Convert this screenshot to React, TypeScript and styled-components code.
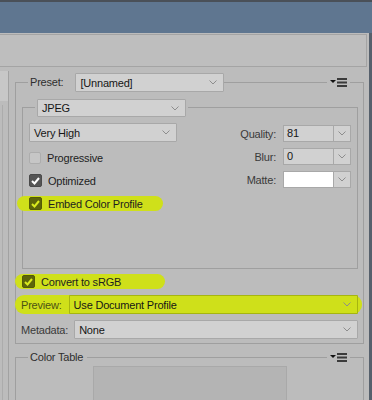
import React from 'react';
import styled, { createGlobalStyle } from 'styled-components';

const GlobalStyle = createGlobalStyle`
  html, body { margin: 0; padding: 0; background: #bcbcbc; }
  body {
    font-family: "Liberation Sans", Arial, sans-serif;
    font-size: 11px;
    letter-spacing: -0.2px;
    color: #1e1e1e;
  }
  * { box-sizing: border-box; }
`;

const MARKER = '#cfe01a';
const LINE = '#9f9f9f';

const Window = styled.div`
  width: 372px;
  height: 400px;
  overflow: hidden;
  display: flex;
  flex-direction: column;
  background: #bcbcbc;
  border-top: 2px solid #4a5058;
`;

const TitleBar = styled.div`
  flex: none;
  height: 31px;
  background: #5f7690;
`;

const Frame = styled.div`
  flex: 1;
  display: flex;
  min-height: 0;
`;

const Workspace = styled.div`
  flex: 1;
  display: flex;
  flex-direction: column;
  min-width: 0;
`;

const WindowEdge = styled.div`
  width: 3px;
  background: #56606c;
`;

const ToolbarBand = styled.div`
  flex: none;
  height: 34px;
  padding-top: 1px;
`;

const ToolbarBox = styled.div`
  height: 33px;
  margin-left: -1px;
  margin-right: 2px;
  border: 1px solid #a4a4a4;
  background: #bebebe;
`;

const Columns = styled.div`
  flex: 1;
  display: flex;
  min-height: 0;
`;

const LeftPanel = styled.div`
  width: 9px;
  margin-top: 4px;
  border-right: 1px solid #a2a2a2;
  display: flex;
  flex-direction: column;
`;

const LeftHead = styled.div`
  height: 30px;
  background: #c7c7c7;
`;

const LeftBody = styled.div`
  flex: 1;
  margin: 4px 0 0 2px;
  border-left: 1px solid #acacac;
`;

const Main = styled.div`
  flex: 1;
  padding: 6px 5px 0 6px;
`;

const Group = styled.div<{ $gap?: number }>`
  margin-top: ${(p) => p.$gap ?? 9}px;
  border: 1px solid ${LINE};
  padding: 0 5px 4px 6px;
`;

const InnerGroup = styled.div`
  margin-top: 15px;
  border: 1px solid ${LINE};
  padding: 0 6px 57px 6px;
`;

const GroupHead = styled.div<{ $h: number }>`
  display: flex;
  align-items: center;
  height: ${(p) => p.$h}px;
  margin-top: ${(p) => -Math.ceil(p.$h / 2)}px;
`;

const Legend = styled.span<{ $indent: number; $after: number }>`
  margin-left: ${(p) => p.$indent}px;
  padding: 0 ${(p) => p.$after}px 0 2px;
  background: #bcbcbc;
  color: #2e2e2e;
  line-height: 19px;
`;

const HeadSlot = styled.div<{ $indent: number }>`
  margin-left: ${(p) => p.$indent}px;
  padding: 0 2px;
  background: #bcbcbc;
  display: flex;
`;

const Spacer = styled.div`
  flex: 1;
`;

const MenuButton = styled.div`
  display: flex;
  align-items: center;
  padding: 0 3px;
  margin-right: 8px;
  background: #bcbcbc;
  height: 11px;
`;

const SelectBox = styled.div<{ $w?: number; $h?: number; $hl?: boolean }>`
  display: flex;
  align-items: center;
  width: ${(p) => (p.$w ? `${p.$w}px` : 'auto')};
  flex: ${(p) => (p.$w ? 'none' : '1')};
  height: ${(p) => p.$h ?? 19}px;
  padding: 0 6px 0 4px;
  border: 1px solid ${(p) => (p.$hl ? 'rgba(90, 100, 0, 0.35)' : '#a8a8a8')};
  border-radius: 1px;
  background: ${(p) => (p.$hl ? MARKER : '#d1d1d1')};
  color: #161616;
  white-space: nowrap;
`;

const SelectText = styled.span`
  flex: 1;
`;

const Body = styled.div`
  display: flex;
  justify-content: space-between;
  align-items: flex-start;
  margin-top: 6px;
`;

const LeftCol = styled.div`
  display: flex;
  flex-direction: column;
  gap: 8px;
`;

const RightCol = styled.div`
  display: grid;
  grid-template-columns: auto 68px;
  column-gap: 7px;
  row-gap: 6px;
  align-items: center;
  align-content: start;
  justify-items: end;
  padding-top: 2px;
`;

const FieldLabel = styled.span<{ $hl?: boolean }>`
  color: ${(p) => (p.$hl ? '#4b5214' : '#3a3a3a')};
  white-space: nowrap;
`;

const Combo = styled.div`
  display: flex;
  width: 68px;
  height: 17px;
  border: 1px solid #a8a8a8;
  background: #d1d1d1;
`;

const ComboField = styled.div<{ $white?: boolean }>`
  flex: 1;
  padding-left: 3px;
  line-height: 15px;
  background: ${(p) => (p.$white ? '#ffffff' : 'transparent')};
  color: #161616;
`;

const ComboButton = styled.div`
  width: 17px;
  border-left: 1px solid #a8a8a8;
  display: flex;
  align-items: center;
  justify-content: center;
`;

const CheckRow = styled.div`
  display: flex;
  align-items: center;
  gap: 6px;
  height: 15px;
  color: #1e1e1e;
  white-space: nowrap;
`;

const Marker = styled.div<{ $left: number; $right: number; $top?: number }>`
  display: flex;
  align-items: center;
  gap: 6px;
  align-self: flex-start;
  height: 15px;
  margin: ${(p) => p.$top ?? 0}px 0 0 ${(p) => -p.$left}px;
  padding: 0 ${(p) => p.$right}px 0 ${(p) => p.$left}px;
  border-radius: 8px;
  background: ${MARKER};
  white-space: nowrap;
`;

const Box = styled.span<{ $checked?: boolean; $hl?: boolean }>`
  flex: none;
  width: ${(p) => (p.$checked ? 13 : 12)}px;
  height: ${(p) => (p.$checked ? 13 : 12)}px;
  border-radius: 2px;
  border: 1px solid ${(p) => (p.$checked ? (p.$hl ? '#535a06' : '#4a4a4a') : '#adadad')};
  background: ${(p) => (p.$checked ? (p.$hl ? '#5d650a' : '#555555') : '#c6c6c6')};
  display: flex;
  align-items: center;
  justify-content: center;
`;

const Section = styled.div`
  display: flex;
  flex-direction: column;
`;

const FormRow = styled.div<{ $gap: number; $top: number }>`
  display: flex;
  align-items: center;
  gap: ${(p) => p.$gap}px;
  margin-top: ${(p) => p.$top}px;
  margin-left: -1px;
`;

const PreviewMarker = styled.div`
  display: flex;
  align-items: center;
  gap: 7px;
  height: 19px;
  margin: 6px -4px 0 -7px;
  padding: 0 4px 0 6px;
  border-radius: 9px;
  background: ${MARKER};
`;

const TableArea = styled.div`
  margin-left: 71px;
  width: 194px;
  height: 40px;
  border: 1px solid #a9a9a9;
  background: #b4b4b4;
`;

const Chevron = () => (
  <svg width="8" height="5" viewBox="0 0 8 5">
    <polyline points="0.5,0.5 4,4 7.5,0.5" fill="none" stroke="#8d8d8d" strokeWidth="1" />
  </svg>
);

const MenuIcon = () => (
  <svg width="17" height="9" viewBox="0 0 17 9">
    <polygon points="0,2 6,2 3,5" fill="#111" />
    <rect x="7" y="0" width="10" height="2" fill="#3b3b3b" />
    <rect x="7" y="3.5" width="10" height="2" fill="#3b3b3b" />
    <rect x="7" y="7" width="10" height="2" fill="#3b3b3b" />
  </svg>
);

const Check = ({ color }: { color: string }) => (
  <svg width="9" height="8" viewBox="0 0 9 8">
    <polyline points="1,4 3.5,6.5 8,1" fill="none" stroke={color} strokeWidth="2" />
  </svg>
);

const Select = ({ value, w, h, hl }: { value: string; w?: number; h?: number; hl?: boolean }) => (
  <SelectBox $w={w} $h={h} $hl={hl}>
    <SelectText>{value}</SelectText>
    <Chevron />
  </SelectBox>
);

const CheckBox = ({ checked, hl }: { checked?: boolean; hl?: boolean }) => (
  <Box $checked={checked} $hl={hl}>
    {checked && <Check color={hl ? '#d9ea1e' : '#ffffff'} />}
  </Box>
);

const settings = [
  { label: 'Quality:', value: '81' },
  { label: 'Blur:', value: '0' },
  { label: 'Matte:', value: '', white: true },
];

export default function App() {
  return (
    <>
      <GlobalStyle />
      <Window>
        <TitleBar />
        <Frame>
          <Workspace>
            <ToolbarBand>
              <ToolbarBox />
            </ToolbarBand>
            <Columns>
              <LeftPanel>
                <LeftHead />
                <LeftBody />
              </LeftPanel>
              <Main>
                <Group>
                  <GroupHead $h={19}>
                    <Legend $indent={6} $after={12}>Preset:</Legend>
                    <Select value="[Unnamed]" w={149} />
                    <Spacer />
                    <MenuButton>
                      <MenuIcon />
                    </MenuButton>
                  </GroupHead>

                  <InnerGroup>
                    <GroupHead $h={18}>
                      <HeadSlot $indent={6}>
                        <Select value="JPEG" w={149} h={18} />
                      </HeadSlot>
                    </GroupHead>
                    <Body>
                      <LeftCol>
                        <Select value="Very High" w={148} />
                        <CheckRow>
                          <CheckBox />
                          Progressive
                        </CheckRow>
                        <CheckRow>
                          <CheckBox checked />
                          Optimized
                        </CheckRow>
                        <Marker $left={12} $right={20}>
                          <CheckBox checked hl />
                          Embed Color Profile
                        </Marker>
                      </LeftCol>
                      <RightCol>
                        {settings.map((s) => (
                          <React.Fragment key={s.label}>
                            <FieldLabel>{s.label}</FieldLabel>
                            <Combo>
                              <ComboField $white={s.white}>{s.value}</ComboField>
                              <ComboButton>
                                <Chevron />
                              </ComboButton>
                            </Combo>
                          </React.Fragment>
                        ))}
                      </RightCol>
                    </Body>
                  </InnerGroup>

                  <Section>
                    <Marker $left={7} $right={44} $top={5}>
                      <CheckBox checked hl />
                      Convert to sRGB
                    </Marker>
                    <PreviewMarker>
                      <FieldLabel $hl>Preview:</FieldLabel>
                      <Select value="Use Document Profile" hl />
                    </PreviewMarker>
                    <FormRow $gap={6} $top={6}>
                      <FieldLabel>Metadata:</FieldLabel>
                      <Select value="None" />
                    </FormRow>
                  </Section>
                </Group>

                <Group $gap={13}>
                  <GroupHead $h={17}>
                    <Legend $indent={6} $after={4}>Color Table</Legend>
                    <Spacer />
                    <MenuButton>
                      <MenuIcon />
                    </MenuButton>
                  </GroupHead>
                  <TableArea />
                </Group>
              </Main>
            </Columns>
          </Workspace>
          <WindowEdge />
        </Frame>
      </Window>
    </>
  );
}
